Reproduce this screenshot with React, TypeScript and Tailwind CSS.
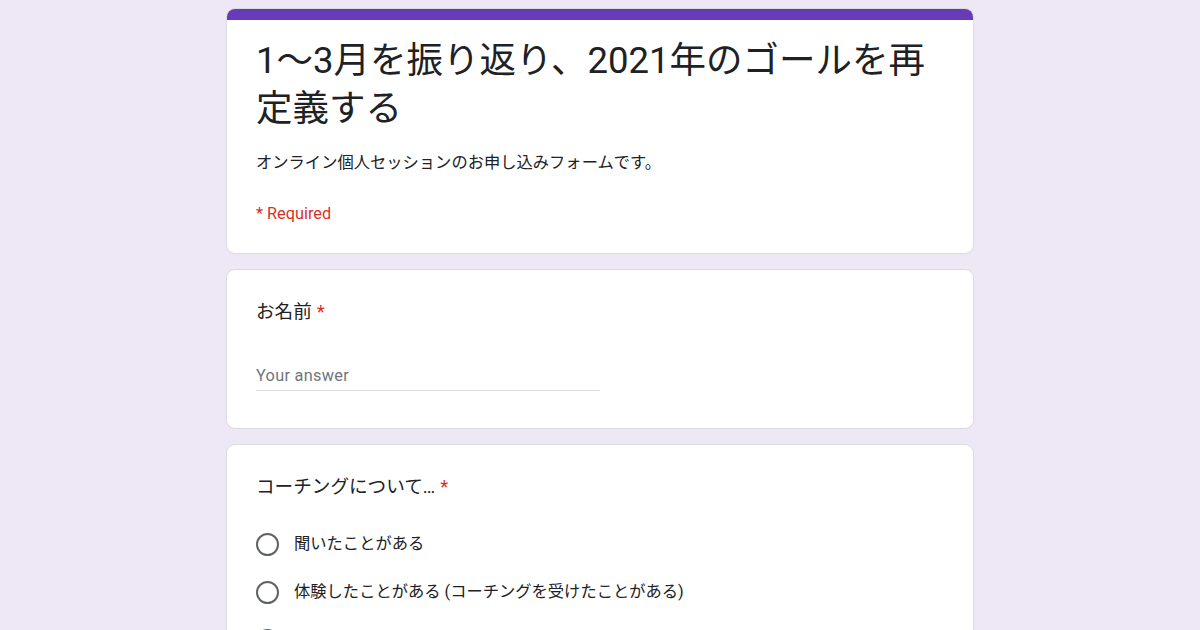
import React from 'react';

const options = [
  '聞いたことがある',
  '体験したことがある (コーチングを受けたことがある)',
  'コーチングの仕事をしている',
];

function Card({ children, className = '' }: { children: React.ReactNode; className?: string }) {
  return (
    <div className={`shrink-0 bg-white border border-[#dadce0] rounded-[9px] ${className}`}>
      {children}
    </div>
  );
}

function Asterisk() {
  return <span className="text-[#d93025] ml-[5px]">*</span>;
}

export default function App() {
  return (
    <div
      className="w-[1200px] h-[630px] overflow-hidden bg-[#ede7f6] flex justify-center pt-2"
      style={{ fontFamily: 'Roboto, "Noto Sans CJK JP", sans-serif' }}
    >
      <div className="w-[748px] flex flex-col gap-[15px]">
        {/* Header card */}
        <Card className="overflow-hidden">
          <div className="h-[11px] bg-[#673ab7]" />
          <div className="px-[29px] pt-[17px] pb-[27px]">
            <h1 className="text-[36.5px] leading-[48px] text-[#202124] font-normal">
              1〜3月を振り返り、2021年のゴールを再定義する
            </h1>
            <p className="mt-[18px] text-[16.3px] leading-[24px] text-[#202124]">
              オンライン個人セッションのお申し込みフォームです。
            </p>
            <p className="mt-[27px] text-[16.3px] leading-[24px] text-[#d93025]">* Required</p>
          </div>
        </Card>

        {/* Name */}
        <Card className="px-[29px] pt-[28px] pb-[37px]">
          <div className="text-[18.6px] leading-[28px] text-[#202124]">
            お名前
            <Asterisk />
          </div>
          <div className="mt-[38px] w-[344px] border-b border-[#dadce0] pb-[2px]">
            <span className="text-[16.3px] leading-[24px] text-[#70757a] tracking-[0.3px]">Your answer</span>
          </div>
        </Card>

        {/* Coaching */}
        <Card className="px-[29px] pt-[28px] pb-[30px]">
          <div className="text-[18.6px] leading-[28px] text-[#202124]">
            コーチングについて…
            <Asterisk />
          </div>
          <div className="mt-[31px] flex flex-col gap-[24px]">
            {options.map((o) => (
              <div key={o} className="flex items-center h-[24px]">
                <div className="w-[23px] h-[23px] rounded-full border-2 border-[#5f6368] shrink-0" />
                <span className="ml-[15px] text-[16.3px] leading-[24px] text-[#202124]">{o}</span>
              </div>
            ))}
          </div>
        </Card>
      </div>
    </div>
  );
}
